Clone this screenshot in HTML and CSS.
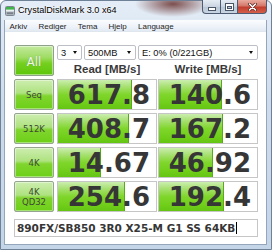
FILE: index.html
```html
<!DOCTYPE html>
<html lang="sv">
<head>
    <meta charset="UTF-8">
    <title>CrystalDiskMark 3.0 x64</title>
    <link rel="stylesheet" href="styles.css">
</head>
<body>
    <div class="window">
        <div class="titlebar">
            <svg class="app-icon" width="10" height="10" viewBox="0 0 10 10">
                <rect x="0.5" y="0.5" width="9" height="9" rx="1" fill="#eef1f3" stroke="#7d8791"/>
                <rect x="1" y="1" width="8" height="2.6" fill="#3fb54a"/>
                <rect x="1" y="5.5" width="8" height="3.5" fill="#a9b1b8"/>
                <rect x="2" y="6.6" width="6" height="1" fill="#59636c"/>
            </svg>
            <span class="title">CrystalDiskMark 3.0 x64</span>
            <div class="caption">
                <span class="cap-btn min"><span class="glyph-min"></span></span>
                <span class="cap-btn max"><span class="glyph-max"></span></span>
                <span class="cap-btn close">
                    <svg width="9" height="8" viewBox="0 0 9 8">
                        <path d="M1.5,1 L7.5,7 M7.5,1 L1.5,7" stroke="#5a2a24" stroke-width="3" stroke-linecap="round"/>
                        <path d="M1.5,1 L7.5,7 M7.5,1 L1.5,7" stroke="#fff" stroke-width="1.6" stroke-linecap="round"/>
                    </svg>
                </span>
            </div>
        </div>
        <div class="client">
            <div class="menubar">
                <span class="menu-item">Arkiv</span>
                <span class="menu-item">Rediger</span>
                <span class="menu-item">Tema</span>
                <span class="menu-item">Hjelp</span>
                <span class="menu-item">Language</span>
            </div>
            <div class="board">
                <div class="all-btn">All</div>
                <div class="selects">
                    <div class="combo combo-count">3</div>
                    <div class="combo combo-size">500MB</div>
                    <div class="combo combo-drive">E: 0% (0/221GB)</div>
                </div>
                <div class="head">Read [MB/s]</div>
                <div class="head">Write [MB/s]</div>

                <div class="label">Seq</div>
                <div class="meter" style="--fill: 73px">617.8</div>
                <div class="meter" style="--fill: 62px">140.6</div>

                <div class="label">512K</div>
                <div class="meter" style="--fill: 70px">408.7</div>
                <div class="meter" style="--fill: 63px">167.2</div>

                <div class="label">4K</div>
                <div class="meter" style="--fill: 42px">14.67</div>
                <div class="meter" style="--fill: 53px">46.92</div>

                <div class="label two-line">4K<br>QD32</div>
                <div class="meter" style="--fill: 66px">254.6</div>
                <div class="meter" style="--fill: 64px">192.4</div>

                <div class="comment">890FX/SB850 3R0 X25-M G1 SS 64KB<span class="caret"></span></div>
            </div>
        </div>
    </div>
</body>
</html>
```

FILE: styles.css
```css
body {
    margin: 0;
    background: #fff;
    font-family: "Liberation Sans", Arial, sans-serif;
    overflow: hidden;
}
.window {
    width: 272px;
    height: 250px;
    box-sizing: border-box;
    padding: 0 4px 4px 3px;
    border: 1px solid #6f8196;
    border-radius: 6px 6px 0 0;
    background:
        radial-gradient(ellipse 38px 13px at 172px 3px, rgba(105, 50, 48, 0.85), rgba(105, 50, 48, 0) 100%),
        linear-gradient(to bottom, #e4edf7 0%, #cddcec 40%, #c4d5e8 100%);
    display: flex;
    flex-direction: column;
}
.titlebar {
    height: 19px;
    display: flex;
    align-items: center;
}
.app-icon {
    margin-left: 1px;
    flex: none;
}
.title {
    margin-left: 3px;
    font-size: 9.1px;
    line-height: 19px;
    color: #000;
    text-shadow: 0 0 4px #fff, 0 0 2px #fff;
}
.caption {
    display: flex;
    margin-left: auto;
    align-self: flex-start;
    margin-top: -1px;
}
.cap-btn {
    height: 14px;
    box-sizing: border-box;
    border: 1px solid #4d5c70;
    border-top: none;
    display: flex;
    align-items: center;
    justify-content: center;
}
.min {
    width: 18px;
    border-right: none;
    border-radius: 0 0 0 4px;
    background: linear-gradient(to bottom, #e6ecf3 0%, #cbd5e1 50%, #b9c6d5 51%, #c9d5e2 100%);
}
.max {
    width: 18px;
    background: linear-gradient(to bottom, #e6ecf3 0%, #cbd5e1 50%, #b9c6d5 51%, #c9d5e2 100%);
}
.close {
    width: 29px;
    border-left: none;
    border-radius: 0 0 4px 0;
    background: linear-gradient(to bottom, #e9ab9f 0%, #d4786a 45%, #c23e2e 55%, #d4604a 100%);
}
.glyph-min {
    width: 6px;
    height: 2px;
    margin-top: 5px;
    background: #fff;
    box-shadow: 0 0 0 1px #4a5566;
}
.glyph-max {
    width: 5px;
    height: 3px;
    border: 1px solid #fff;
    border-top-width: 2px;
    box-shadow: 0 0 0 1px #4a5566, inset 0 0 0 1px #4a5566;
}
.client {
    flex: 1;
    background: #fff;
    border: 1px solid #93a6bb;
    border-top: none;
}
.menubar {
    height: 12px;
    line-height: 14px;
    overflow: hidden;
    font-size: 8px;
    color: #1e1e1e;
    background: linear-gradient(to bottom, #fbfcfe 0%, #eef3f9 60%, #e2eaf3 100%);
    border-bottom: 1px solid #dfe6ee;
    box-sizing: border-box;
    white-space: nowrap;
}
.menu-item {
    padding: 0 4.5px;
}
.board {
    display: grid;
    grid-template-columns: 42px 100px 100px;
    grid-template-rows: 15px 13px repeat(4, 31px) auto;
    column-gap: 1px;
    row-gap: 3px;
    padding: 13px 0 0 9px;
}
.all-btn {
    grid-row: 1 / 3;
    grid-column: 1;
    width: 40px;
    box-sizing: border-box;
    border: 1px solid #8fa08c;
    border-radius: 2px;
    background: linear-gradient(to bottom, #c4ea9f 0%, #9edc63 40%, #74cf1e 60%, #5ec60c 100%);
    box-shadow: inset 0 0 0 1px rgba(255, 255, 255, 0.45);
    font-family: "DejaVu Sans", sans-serif;
    font-size: 11.5px;
    color: #eef5e8;
    text-shadow: 0 0 1px #7a9a66;
    display: flex;
    align-items: center;
    justify-content: center;
    padding-top: 3px;
}
.selects {
    grid-column: 2 / 4;
    grid-row: 1;
    display: flex;
    gap: 2px;
}
.combo {
    height: 15px;
    box-sizing: border-box;
    border: 1px solid #bcbfc5;
    border-radius: 2px;
    background: #fff;
    font-size: 9.3px;
    line-height: 14px;
    color: #111;
    padding-left: 3px;
    position: relative;
}
.combo::after {
    content: "";
    position: absolute;
    right: 4px;
    top: 5px;
    border-left: 2.5px solid transparent;
    border-right: 2.5px solid transparent;
    border-top: 3px solid #111;
}
.combo-count {
    width: 25px;
}
.combo-size {
    width: 52px;
}
.combo-drive {
    flex: 1;
}
.head {
    grid-row: 2;
    font-weight: bold;
    font-size: 11.5px;
    line-height: 13px;
    text-align: center;
    color: #3a3a3a;
    white-space: nowrap;
}
.label {
    width: 40px;
    box-sizing: border-box;
    border: 1px solid #95a592;
    border-radius: 2px;
    background: linear-gradient(to bottom, #cdeeb0 0%, #aee27f 45%, #80d52e 55%, #6dcf18 100%);
    box-shadow: inset 0 0 0 1px rgba(255, 255, 255, 0.4);
    font-family: "DejaVu Sans", sans-serif;
    font-size: 8.5px;
    line-height: 10px;
    color: #3d4a33;
    display: flex;
    align-items: center;
    justify-content: center;
    text-align: center;
}
.meter {
    box-sizing: border-box;
    border: 1px solid #c6c6c6;
    overflow: hidden;
    background:
        linear-gradient(#58a91c, #58a91c) no-repeat var(--fill) 0 / 1px 100%,
        linear-gradient(to bottom, #cbeeb0 0%, #a4df6c 25%, #80d62c 50%, #70ce19 80%, #64c513 100%) no-repeat 0 0 / var(--fill) 100%,
        #fff;
    font-family: "DejaVu Sans", sans-serif;
    font-weight: bold;
    font-size: 26px;
    line-height: 29px;
    padding: 1px 6px 0 0;
    text-align: right;
    color: #363636;
}
.comment {
    grid-column: 1 / 4;
    margin-top: 4px;
    height: 18px;
    box-sizing: border-box;
    border: 1px solid #c6c6c6;
    padding-left: 2px;
    font-family: "DejaVu Sans", sans-serif;
    font-weight: bold;
    font-size: 10.5px;
    line-height: 16px;
    color: #363636;
    white-space: nowrap;
}
.caret {
    display: inline-block;
    width: 0;
    height: 12px;
    margin-left: 1px;
    border-left: 1px solid #000;
    vertical-align: -2px;
}
```
